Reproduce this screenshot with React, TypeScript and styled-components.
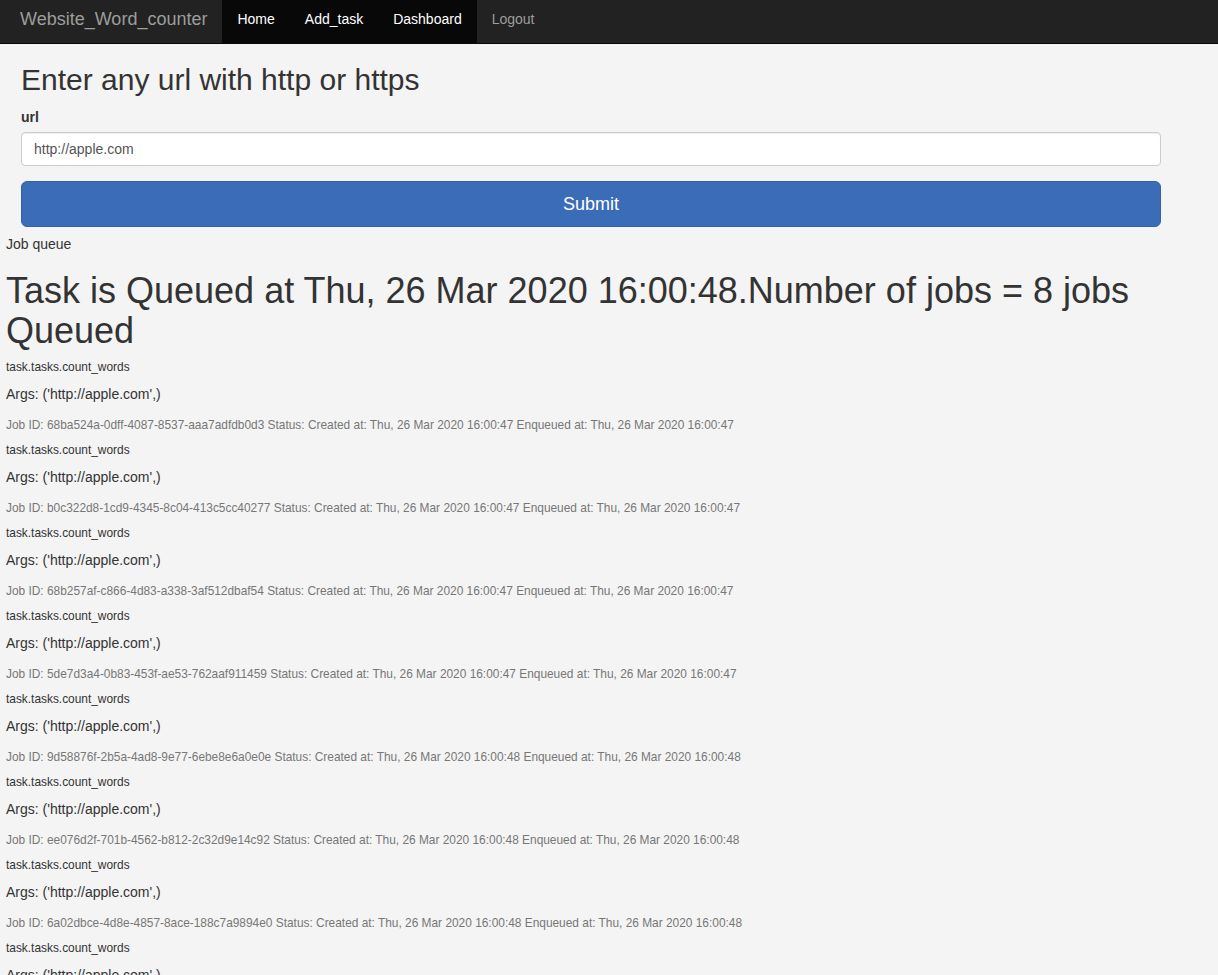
import React from "react";
import styled, { createGlobalStyle } from "styled-components";

const GlobalStyle = createGlobalStyle`
  * { box-sizing: border-box; }
  html, body { margin: 0; padding: 0; }
  body {
    background: #f4f4f4;
    color: #333;
    font-family: "Liberation Sans", Helvetica, Arial, sans-serif;
    font-size: 14px;
    line-height: 20px;
  }
`;

const Navbar = styled.nav`
  display: flex;
  align-items: stretch;
  height: 44px;
  background: #222;
  border-bottom: 1px solid #080808;
  padding-left: 5px;
`;

const Brand = styled.a`
  display: block;
  padding: 9px 15px 14px;
  font-size: 18px;
  line-height: 20px;
  color: #9d9d9d;
  text-decoration: none;
`;

const NavList = styled.ul`
  display: flex;
  margin: 0;
  padding: 0;
  list-style: none;
`;

const NavLink = styled.a<{ $active?: boolean }>`
  display: block;
  padding: 9px 15px 14px;
  font-size: 14px;
  line-height: 20px;
  text-decoration: none;
  color: ${(p) => (p.$active ? "#fff" : "#9d9d9d")};
  background: ${(p) => (p.$active ? "#080808" : "transparent")};
`;

const Page = styled.main`
  padding: 0 6px;
`;

const FormContainer = styled.form`
  width: 1170px;
  padding: 19px 15px 0;
`;

const Title = styled.h2`
  margin: 0 0 11px;
  font-size: 30px;
  line-height: 33px;
  font-weight: 500;
`;

const Label = styled.label`
  display: block;
  margin-bottom: 5px;
  font-weight: 700;
`;

const FormGroup = styled.div`
  margin-bottom: 15px;
`;

const Input = styled.input`
  display: block;
  width: 100%;
  height: 34px;
  padding: 6px 12px;
  font-family: inherit;
  font-size: 14px;
  line-height: 20px;
  color: #555;
  background: #fff;
  border: 1px solid #ccc;
  border-radius: 4px;
  box-shadow: inset 0 1px 1px rgba(0, 0, 0, 0.075);
  outline: none;
`;

const SubmitButton = styled.button`
  display: block;
  width: 100%;
  height: 46px;
  padding: 10px 16px;
  font-family: inherit;
  font-size: 18px;
  line-height: 24px;
  color: #fff;
  background: #3a6cb8;
  border: 1px solid #3262a8;
  border-radius: 6px;
  cursor: pointer;
`;

const QueueLabel = styled.div`
  margin-top: 7px;
`;

const Headline = styled.h1`
  margin: 17px 0 7px;
  font-size: 36px;
  line-height: 39.6px;
  font-weight: 500;
`;

const JobItem = styled.div`
  display: flex;
  flex-direction: column;
`;

const FuncName = styled.div`
  font-size: 11.9px;
  line-height: 20px;
  margin-bottom: 7px;
`;

const Args = styled.p`
  margin: 0 0 11px;
  font-size: 14px;
  line-height: 20px;
`;

const Meta = styled.div`
  margin-bottom: 5px;
  font-size: 11.9px;
  line-height: 20px;
  color: #777;
`;

const jobs = [
  { id: "68ba524a-0dff-4087-8537-aaa7adfdb0d3", t: "16:00:47" },
  { id: "b0c322d8-1cd9-4345-8c04-413c5cc40277", t: "16:00:47" },
  { id: "68b257af-c866-4d83-a338-3af512dbaf54", t: "16:00:47" },
  { id: "5de7d3a4-0b83-453f-ae53-762aaf911459", t: "16:00:47" },
  { id: "9d58876f-2b5a-4ad8-9e77-6ebe8e6a0e0e", t: "16:00:48" },
  { id: "ee076d2f-701b-4562-b812-2c32d9e14c92", t: "16:00:48" },
  { id: "6a02dbce-4d8e-4857-8ace-188c7a9894e0", t: "16:00:48" },
  { id: "3f1c9a72-5b6e-4e2d-9a41-7c0d2e8b5f13", t: "16:00:48" },
];

export default function App() {
  return (
    <>
      <GlobalStyle />
      <Navbar>
        <Brand href="#">Website_Word_counter</Brand>
        <NavList>
          <li><NavLink $active href="#">Home</NavLink></li>
          <li><NavLink $active href="#">Add_task</NavLink></li>
          <li><NavLink $active href="#">Dashboard</NavLink></li>
          <li><NavLink href="#">Logout</NavLink></li>
        </NavList>
      </Navbar>
      <Page>
        <FormContainer onSubmit={(e) => e.preventDefault()}>
          <Title>Enter any url with http or https</Title>
          <FormGroup>
            <Label htmlFor="url">url</Label>
            <Input id="url" type="text" defaultValue="http://apple.com" />
          </FormGroup>
          <SubmitButton type="submit">Submit</SubmitButton>
        </FormContainer>
        <QueueLabel>Job queue</QueueLabel>
        <Headline>
          Task is Queued at Thu, 26 Mar 2020 16:00:48.Number of jobs = 8 jobs Queued
        </Headline>
        {jobs.map((j) => (
          <JobItem key={j.id}>
            <FuncName>task.tasks.count_words</FuncName>
            <Args>Args: ('http://apple.com',)</Args>
            <Meta>
              Job ID: {j.id} Status: Created at: Thu, 26 Mar 2020 {j.t} Enqueued at: Thu, 26 Mar 2020 {j.t}
            </Meta>
          </JobItem>
        ))}
      </Page>
    </>
  );
}
